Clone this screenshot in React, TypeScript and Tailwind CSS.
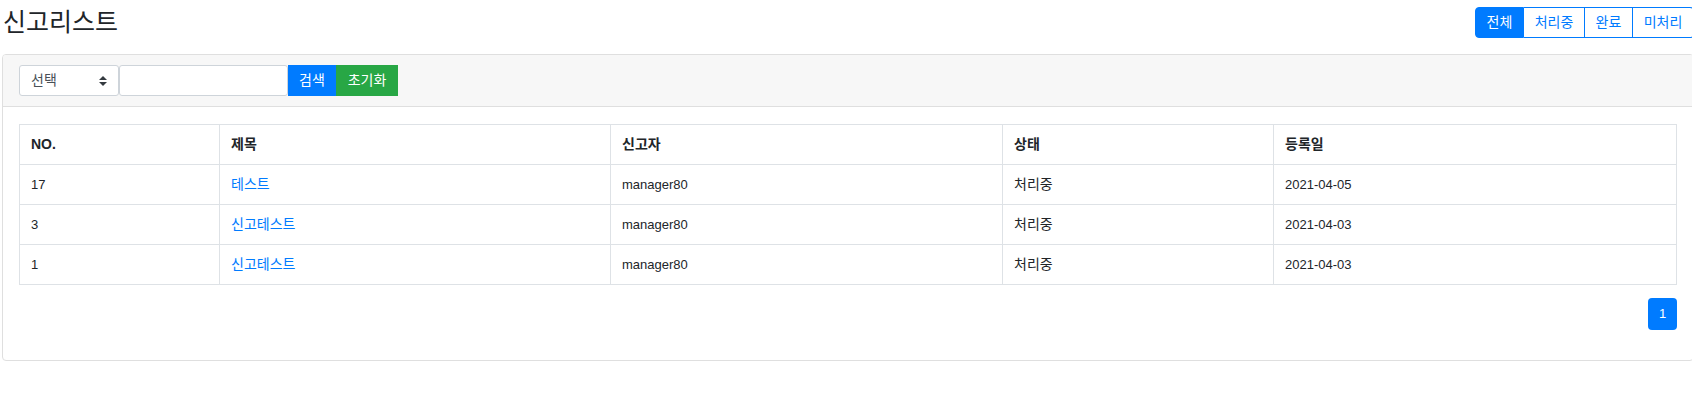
import React from "react";

const rows = [
  { no: "17", title: "테스트", user: "manager80", state: "처리중", date: "2021-04-05" },
  { no: "3", title: "신고테스트", user: "manager80", state: "처리중", date: "2021-04-03" },
  { no: "1", title: "신고테스트", user: "manager80", state: "처리중", date: "2021-04-03" },
];

const widths = ["w-[200px]", "w-[391px]", "w-[392px]", "w-[271px]", "w-[403px]"];
const heads = ["NO.", "제목", "신고자", "상태", "등록일"];

export default function App() {
  return (
    <div className="w-[1692px] h-[411px] overflow-hidden bg-white text-[#212529] font-['Liberation_Sans','Noto_Sans_CJK_KR',sans-serif] text-[14px]">
      <div className="w-[1694px] h-[54px] flex justify-between items-start">
        <h3 className="ml-[3px] mt-[5px] text-[25px] leading-[1.2] font-normal font-['Noto_Sans_CJK_KR',sans-serif] text-[#212529]">
          신고리스트
        </h3>
        <div className="mt-[7px] flex h-[31px] text-[14px]">
          <button className="w-[49px] h-[31px] flex items-center justify-center border border-[#007bff] bg-[#007bff] text-white rounded-l-[4px]">
            전체
          </button>
          <button className="w-[61px] h-[31px] flex items-center justify-center border-y border-r border-[#007bff] bg-white text-[#007bff]">
            처리중
          </button>
          <button className="w-[48px] h-[31px] flex items-center justify-center border-y border-r border-[#007bff] bg-white text-[#007bff]">
            완료
          </button>
          <button className="w-[61px] h-[31px] flex items-center justify-center border-y border-r border-[#007bff] bg-white text-[#007bff] rounded-r-[4px]">
            미처리
          </button>
        </div>
      </div>

      <div className="ml-[2px] w-[1692px] border border-[#dfdfdf] rounded-[4px] overflow-hidden">
        <div className="bg-[#f7f7f7] border-b border-[#dfdfdf] px-[16px] py-[10px] flex h-[52px]">
          <div className="relative w-[100px] h-[31px] bg-white border border-[#ced4da] rounded-[3px] flex items-center pl-[11px] text-[#495057]">
            선택
            <svg className="absolute right-[11px] top-[10px]" width="8" height="10" viewBox="0 0 4 5">
              <path fill="#343a40" d="M2 0L0 2h4zm0 5L0 3h4z" />
            </svg>
          </div>
          <div className="w-[169px] h-[31px] bg-white border border-[#ced4da] rounded-[3px]" />
          <button className="w-[48px] h-[31px] bg-[#007bff] text-white flex items-center justify-center">검색</button>
          <button className="w-[62px] h-[31px] bg-[#28a745] text-white flex items-center justify-center">초기화</button>
        </div>

        <div className="px-[16px] pt-[17px] pb-[30px]">
          <div className="border-l border-t border-[#dee2e6]">
            <div className="flex font-bold">
              {heads.map((h, i) => (
                <div
                  key={h}
                  className={`${widths[i]} h-[40px] border-r border-b border-[#dee2e6] flex items-center pl-[11px] text-[14px]`}
                >
                  {h}
                </div>
              ))}
            </div>
            {rows.map((r, idx) => (
              <div key={idx} className="flex">
                <div className={`${widths[0]} h-[40px] border-r border-b border-[#dee2e6] flex items-center pl-[11px] text-[13px]`}>{r.no}</div>
                <div className={`${widths[1]} h-[40px] border-r border-b border-[#dee2e6] flex items-center pl-[11px]`}>
                  <a className="text-[#007bff]" href="#">{r.title}</a>
                </div>
                <div className={`${widths[2]} h-[40px] border-r border-b border-[#dee2e6] flex items-center pl-[11px] text-[13px]`}>{r.user}</div>
                <div className={`${widths[3]} h-[40px] border-r border-b border-[#dee2e6] flex items-center pl-[11px]`}>{r.state}</div>
                <div className={`${widths[4]} h-[40px] border-r border-b border-[#dee2e6] flex items-center pl-[11px] text-[13px]`}>{r.date}</div>
              </div>
            ))}
          </div>
          <div className="flex justify-end mt-[13px]">
            <div className="w-[29px] h-[32px] rounded-[4px] bg-[#007bff] text-white text-[13px] flex items-center justify-center">1</div>
          </div>
        </div>
      </div>
    </div>
  );
}
